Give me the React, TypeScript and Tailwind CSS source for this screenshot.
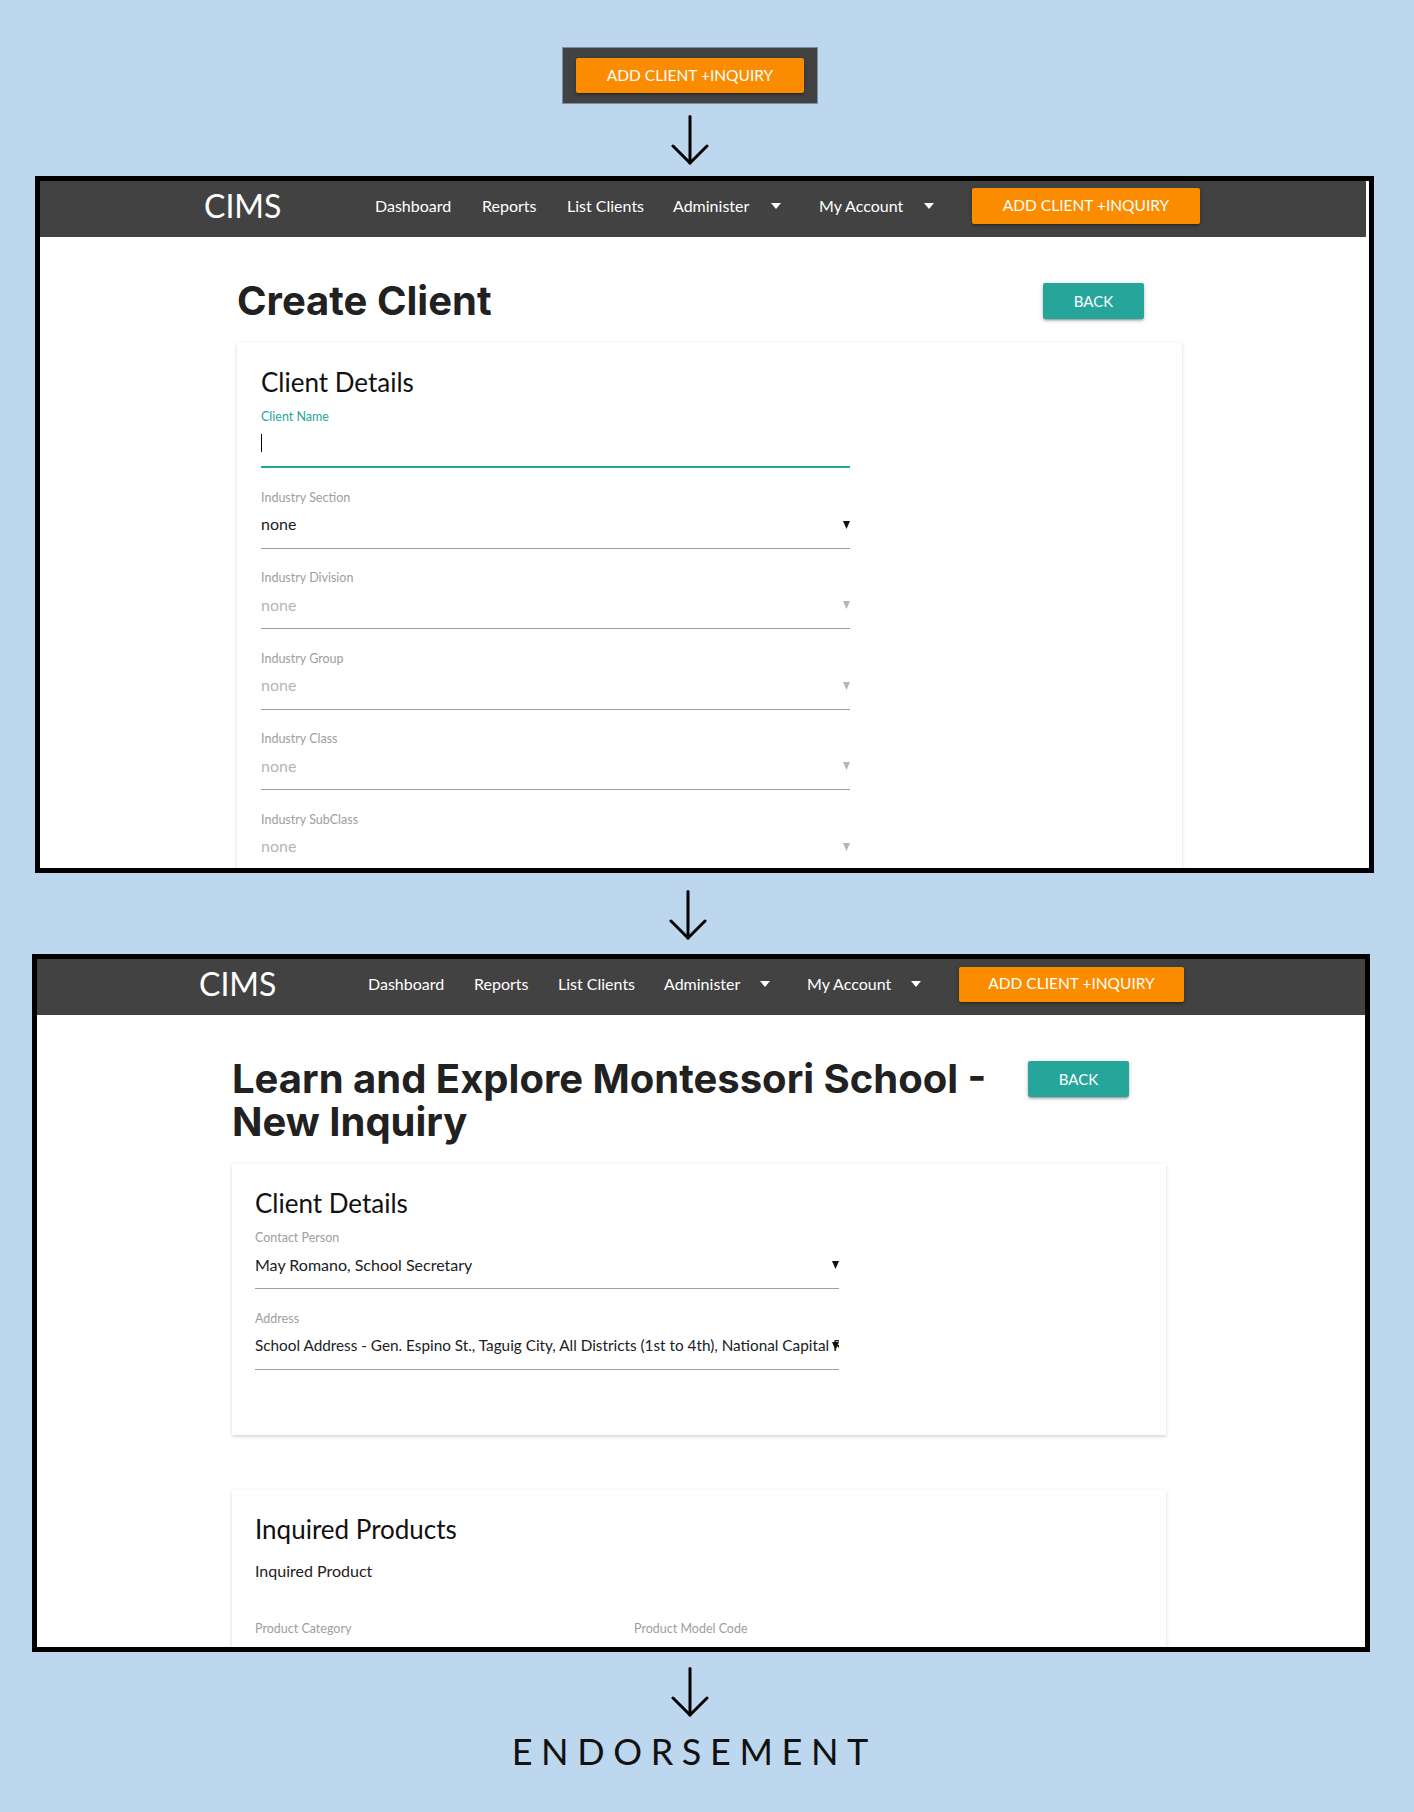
import React from "react";

type Variant = {
  frame: string;
  navMr: string;
  navPad: string;
  cims: string;
  dash: string;
  rep: string;
  list: string;
  admText: string;
  admRest: string;
  accText: string;
  accRest: string;
  btn: string;
  content: string;
  width: string;
  header: string;
  cardPad: string;
  field: string;
};

const v1: Variant = {
  frame: "ml-[35px] mt-[11px] h-[697px] w-[1339px]",
  navMr: "mr-[3px]",
  navPad: "pl-[164px]",
  cims: "w-[171px]",
  dash: "w-[107px]",
  rep: "w-[85px]",
  list: "w-[106px]",
  admText: "w-[98px]",
  admRest: "w-[38px]",
  accText: "w-[105px]",
  accRest: "w-[38px]",
  btn: "h-[36px] w-[228px]",
  content: "pl-[197px]",
  width: "w-[945px]",
  header: "pr-[38px]",
  cardPad: "pl-[24px]",
  field: "w-[589px]",
};

const v2: Variant = {
  frame: "ml-[32px] mt-[14px] h-[698px] w-[1338px]",
  navMr: "",
  navPad: "pl-[162px]",
  cims: "w-[169px]",
  dash: "w-[106px]",
  rep: "w-[84px]",
  list: "w-[106px]",
  admText: "w-[96px]",
  admRest: "w-[37px]",
  accText: "w-[104px]",
  accRest: "w-[38px]",
  btn: "h-[35px] w-[225px]",
  content: "pl-[195px]",
  width: "w-[934px]",
  header: "pr-[37px]",
  cardPad: "pl-[23px]",
  field: "w-[584px]",
};

const btnShadow =
  "shadow-[0_2px_2px_0_rgba(0,0,0,0.14),0_3px_1px_-2px_rgba(0,0,0,0.12),0_1px_5px_0_rgba(0,0,0,0.2)]";
const cardShadow =
  "shadow-[0_2px_2px_0_rgba(0,0,0,0.08),0_1px_5px_0_rgba(0,0,0,0.1)]";

function DownArrow() {
  return (
    <svg width="40" height="50" viewBox="0 0 40 50" fill="none" stroke="#000" strokeWidth="3" strokeLinecap="round" strokeLinejoin="round">
      <path d="M20 1.5V48" />
      <path d="M3 31L20 48L37 31" />
    </svg>
  );
}

function NavCaret() {
  return (
    <svg width="10" height="6" viewBox="0 0 10 6" className="shrink-0">
      <path d="M0 0H10L5 6Z" fill="#fff" />
    </svg>
  );
}

function SelectCaret({ muted }: { muted?: boolean }) {
  return (
    <svg width="7" height="8" viewBox="0 0 7 8" className="absolute right-0 top-[16px]">
      <path d="M0 0H7L3.5 8Z" fill={muted ? "#b5b5b5" : "#111"} />
    </svg>
  );
}

function AddButton({ size }: { size: string }) {
  return (
    <div className={`flex items-center justify-center rounded-[2px] bg-[#fb8c00] text-[15.5px] uppercase text-white ${size} ${btnShadow}`}>
      ADD CLIENT +INQUIRY
    </div>
  );
}

function Navbar({ v }: { v: Variant }) {
  return (
    <div className={`flex h-[56px] items-center bg-[#424242] pb-[6px] text-[16px] text-white ${v.navMr} ${v.navPad}`}>
      <div className={`text-[32px] leading-none ${v.cims}`}>CIMS</div>
      <div className={v.dash}>Dashboard</div>
      <div className={v.rep}>Reports</div>
      <div className={v.list}>List Clients</div>
      <div className="flex items-center">
        <div className={v.admText}>Administer</div>
        <NavCaret />
        <div className={v.admRest} />
      </div>
      <div className="flex items-center">
        <div className={v.accText}>My Account</div>
        <NavCaret />
        <div className={v.accRest} />
      </div>
      <AddButton size={v.btn} />
    </div>
  );
}

function Header({ v, title }: { v: Variant; title: string }) {
  return (
    <div className={`flex items-start justify-between pt-[42px] ${v.header}`}>
      <h1 className="max-w-[770px] font-['Inter',sans-serif] text-[40px] font-bold leading-[43px] text-[#212121]">
        {title}
      </h1>
      <div className={`mt-[4px] flex h-[36px] w-[101px] shrink-0 items-center justify-center rounded-[2px] bg-[#26a69a] text-[15px] text-white ${btnShadow}`}>
        BACK
      </div>
    </div>
  );
}

function SelectField({ label, value, muted, small }: { label: string; value: string; muted?: boolean; small?: boolean }) {
  return (
    <div>
      <div className="text-[12.5px] leading-[14px] text-[#9e9e9e]">{label}</div>
      <div className="relative flex h-[44px] items-center border-b border-[#9e9e9e] pb-[4px]">
        <span
          className={`overflow-hidden whitespace-nowrap ${small ? "text-[15.3px]" : "text-[16px]"} ${
            muted ? "text-[#b5b5b5]" : "text-[#212121]"
          }`}
        >
          {value}
        </span>
        <SelectCaret muted={muted} />
      </div>
    </div>
  );
}

function FocusedField({ label }: { label: string }) {
  return (
    <div>
      <div className="text-[12.5px] leading-[14px] text-[#26a69a]">{label}</div>
      <div className="flex h-[44px] items-center border-b-2 border-[#26a69a] pb-[4px]">
        <span className="h-[18px] w-px bg-black" />
      </div>
    </div>
  );
}

function Frame({ v, title, children }: { v: Variant; title: string; children: React.ReactNode }) {
  return (
    <div className={`overflow-hidden border-[5px] border-black bg-white ${v.frame}`}>
      <Navbar v={v} />
      <div className={v.content}>
        <div className={v.width}>
          <Header v={v} title={title} />
          {children}
        </div>
      </div>
    </div>
  );
}

export default function App() {
  return (
    <div className="min-h-[1812px] w-[1414px] bg-[#bdd7ee] pt-[47px] font-['Lato',sans-serif]">
      <div className="flex w-[1380px] flex-col items-center">
        <div className="border border-[#7b8fa3] bg-[#424242] px-[13px] py-[10px]">
          <AddButton size="h-[35px] w-[228px]" />
        </div>
        <div className="mt-[11px] flex">
          <DownArrow />
        </div>
      </div>

      <Frame v={v1} title="Create Client">
        <div className={`mt-[21px] bg-white pb-[40px] pt-[23px] ${v1.cardPad} ${cardShadow}`}>
          <h2 className="text-[26px] leading-[32px] text-[#111]">Client Details</h2>
          <div className={`mt-[12px] flex flex-col gap-[22.5px] ${v1.field}`}>
            <FocusedField label="Client Name" />
            <SelectField label="Industry Section" value="none" />
            <SelectField label="Industry Division" value="none" muted />
            <SelectField label="Industry Group" value="none" muted />
            <SelectField label="Industry Class" value="none" muted />
            <SelectField label="Industry SubClass" value="none" muted />
          </div>
        </div>
      </Frame>

      <div className="flex w-[1376px] flex-col items-center">
        <div className="mt-[17px] flex">
          <DownArrow />
        </div>
      </div>

      <Frame v={v2} title="Learn and Explore Montessori School - New Inquiry">
        <div className={`mt-[21px] bg-white pb-[65px] pt-[23px] ${v2.cardPad} ${cardShadow}`}>
          <h2 className="text-[26px] leading-[32px] text-[#111]">Client Details</h2>
          <div className={`mt-[12px] flex flex-col gap-[23px] ${v2.field}`}>
            <SelectField label="Contact Person" value="May Romano, School Secretary" />
            <SelectField
              label="Address"
              small
              value="School Address - Gen. Espino St., Taguig City, All Districts (1st to 4th), National Capital Region (NCR)"
            />
          </div>
        </div>
        <div className={`mt-[55px] bg-white pb-[60px] pt-[23px] ${v2.cardPad} ${cardShadow}`}>
          <h2 className="text-[26px] leading-[32px] text-[#111]">Inquired Products</h2>
          <div className="mt-[16px] text-[16px] leading-[20px] text-[#212121]">Inquired Product</div>
          <div className="mt-[41px] flex text-[12.5px] leading-[14px] text-[#9e9e9e]">
            <div className="w-[379px]">Product Category</div>
            <div>Product Model Code</div>
          </div>
        </div>
      </Frame>

      <div className="flex w-[1380px] flex-col items-center">
        <div className="mt-[15px] flex">
          <DownArrow />
        </div>
        <div className="mt-[16px] pl-[0.24em] text-[36px] leading-[36px] tracking-[0.24em] text-[#111]">
          ENDORSEMENT
        </div>
      </div>
    </div>
  );
}
